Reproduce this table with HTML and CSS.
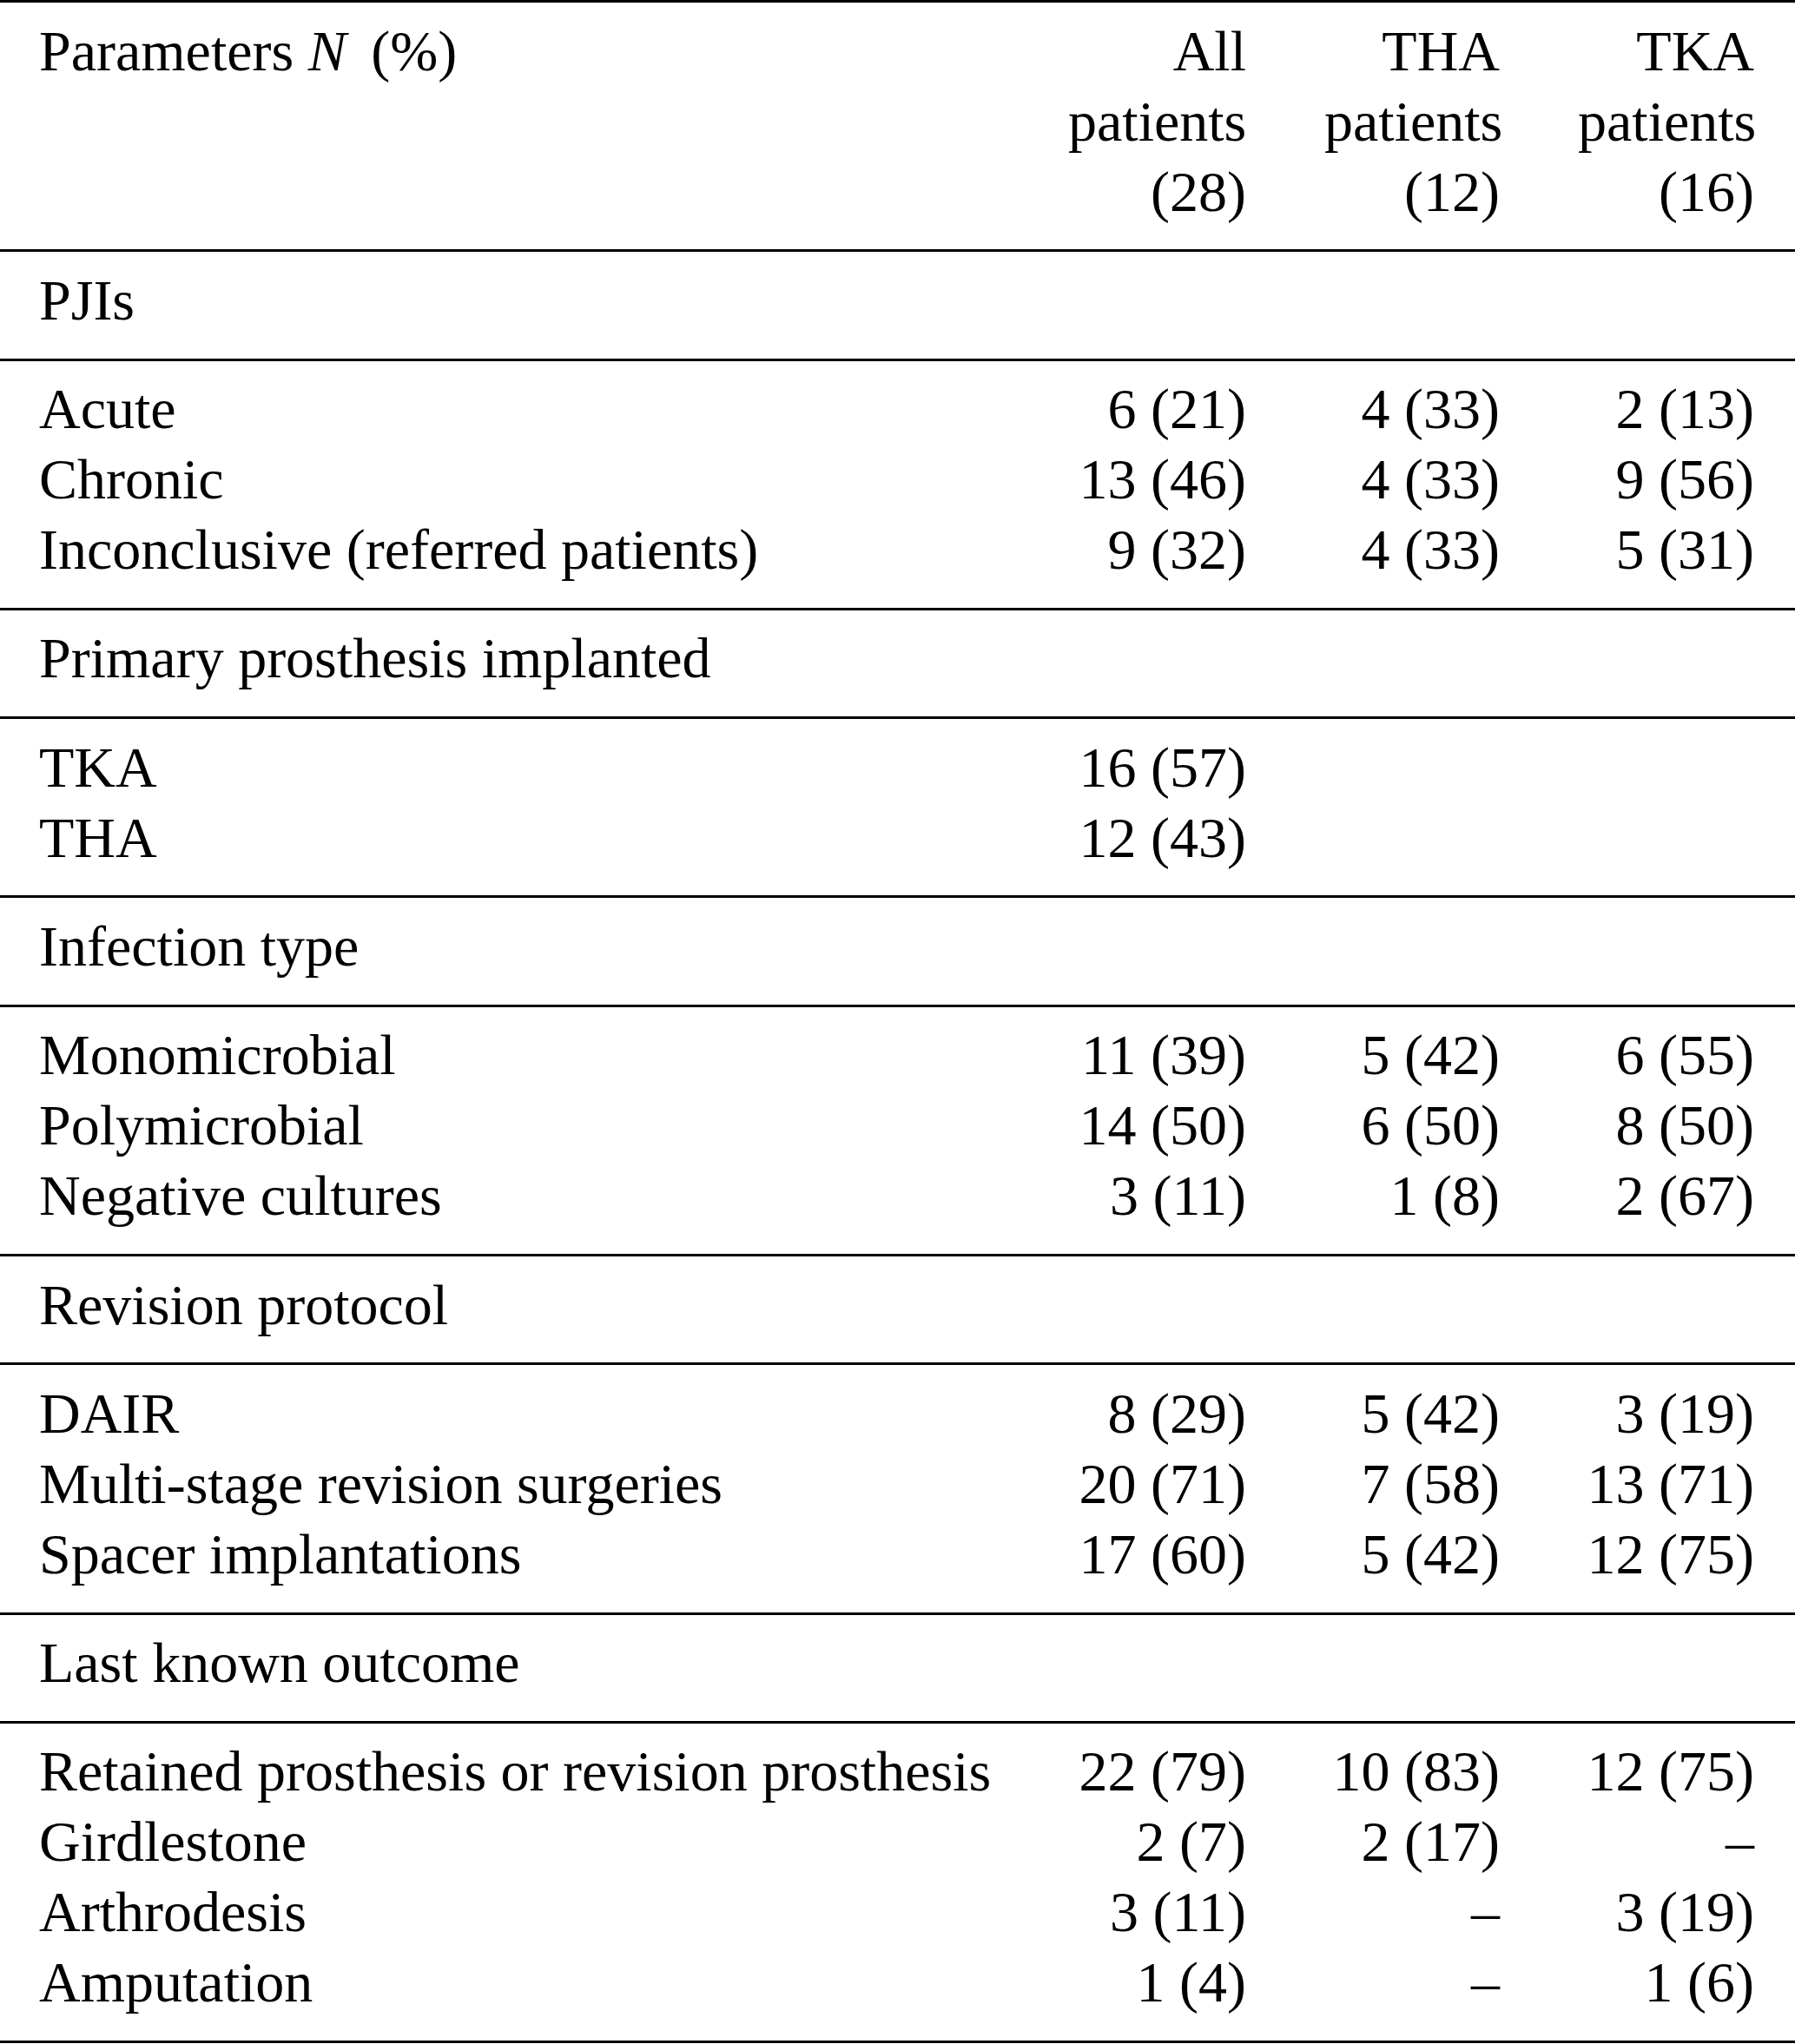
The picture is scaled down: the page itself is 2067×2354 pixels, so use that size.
FILE: index.html
```html
<!DOCTYPE html>
<html lang="en">
<head>
<meta charset="utf-8">
<title>Patient parameters</title>
<link rel="stylesheet" href="styles.css">
</head>
<body>
<table class="tbl">
  <colgroup>
    <col class="c-label">
    <col class="c-num">
    <col class="c-num">
    <col class="c-num">
  </colgroup>
  <thead>
    <tr>
      <th class="lbl">Parameters <i>N</i> (%)</th>
      <th class="num">All<br>patients<br>(28)</th>
      <th class="num">THA<br>patients<br>(12)</th>
      <th class="num">TKA<br>patients<br>(16)</th>
    </tr>
  </thead>
  <tbody class="sec"><tr><td class="lbl" colspan="4">PJIs</td></tr></tbody>
  <tbody>
    <tr><td class="lbl">Acute</td><td class="num">6 (21)</td><td class="num">4 (33)</td><td class="num">2 (13)</td></tr>
    <tr><td class="lbl">Chronic</td><td class="num">13 (46)</td><td class="num">4 (33)</td><td class="num">9 (56)</td></tr>
    <tr><td class="lbl">Inconclusive (referred patients)</td><td class="num">9 (32)</td><td class="num">4 (33)</td><td class="num">5 (31)</td></tr>
  </tbody>
  <tbody class="sec"><tr><td class="lbl" colspan="4">Primary prosthesis implanted</td></tr></tbody>
  <tbody>
    <tr><td class="lbl">TKA</td><td class="num">16 (57)</td><td class="num"></td><td class="num"></td></tr>
    <tr><td class="lbl">THA</td><td class="num">12 (43)</td><td class="num"></td><td class="num"></td></tr>
  </tbody>
  <tbody class="sec"><tr><td class="lbl" colspan="4">Infection type</td></tr></tbody>
  <tbody>
    <tr><td class="lbl">Monomicrobial</td><td class="num">11 (39)</td><td class="num">5 (42)</td><td class="num">6 (55)</td></tr>
    <tr><td class="lbl">Polymicrobial</td><td class="num">14 (50)</td><td class="num">6 (50)</td><td class="num">8 (50)</td></tr>
    <tr><td class="lbl">Negative cultures</td><td class="num">3 (11)</td><td class="num">1 (8)</td><td class="num">2 (67)</td></tr>
  </tbody>
  <tbody class="sec"><tr><td class="lbl" colspan="4">Revision protocol</td></tr></tbody>
  <tbody>
    <tr><td class="lbl">DAIR</td><td class="num">8 (29)</td><td class="num">5 (42)</td><td class="num">3 (19)</td></tr>
    <tr><td class="lbl">Multi-stage revision surgeries</td><td class="num">20 (71)</td><td class="num">7 (58)</td><td class="num">13 (71)</td></tr>
    <tr><td class="lbl">Spacer implantations</td><td class="num">17 (60)</td><td class="num">5 (42)</td><td class="num">12 (75)</td></tr>
  </tbody>
  <tbody class="sec"><tr><td class="lbl" colspan="4">Last known outcome</td></tr></tbody>
  <tbody>
    <tr><td class="lbl">Retained prosthesis or revision prosthesis</td><td class="num">22 (79)</td><td class="num">10 (83)</td><td class="num">12 (75)</td></tr>
    <tr><td class="lbl">Girdlestone</td><td class="num">2 (7)</td><td class="num">2 (17)</td><td class="num">–</td></tr>
    <tr><td class="lbl">Arthrodesis</td><td class="num">3 (11)</td><td class="num">–</td><td class="num">3 (19)</td></tr>
    <tr><td class="lbl">Amputation</td><td class="num">1 (4)</td><td class="num">–</td><td class="num">1 (6)</td></tr>
  </tbody>
</table>
</body>
</html>
```

FILE: styles.css
```css
html, body {
  margin: 0;
  padding: 0;
  background: #ffffff;
}

body {
  font-family: "Liberation Serif", "Times New Roman", serif;
  font-size: 66px;
  line-height: 81px;
  color: #000000;
}

.tbl {
  width: 2067px;
  border-collapse: collapse;
  table-layout: fixed;
  border-top: 3px solid #000;
  border-bottom: 3px solid #000;
}

.c-label { width: 1185px; }
.c-num:nth-child(2) { width: 295px; }
.c-num:nth-child(3) { width: 292px; }
.c-num:nth-child(4) { width: 295px; }

.tbl th,
.tbl td {
  padding: 0 45px;
  font-weight: normal;
  vertical-align: top;
  white-space: nowrap;
}

.tbl th:last-child,
.tbl td:last-child {
  padding-right: 47px;
}

.tbl .lbl { text-align: left; }
.tbl .num { text-align: right; }

.tbl .lbl i {
  font-style: italic;
  margin-right: 12px;
}

.tbl thead th {
  padding-top: 14.5px;
  padding-bottom: 26.8px;
}

.tbl tbody {
  border-top: 3px solid #000;
}

.tbl tbody tr:first-child td { padding-top: 14.5px; }
.tbl tbody tr:last-child td { padding-bottom: 26.8px; }
```
